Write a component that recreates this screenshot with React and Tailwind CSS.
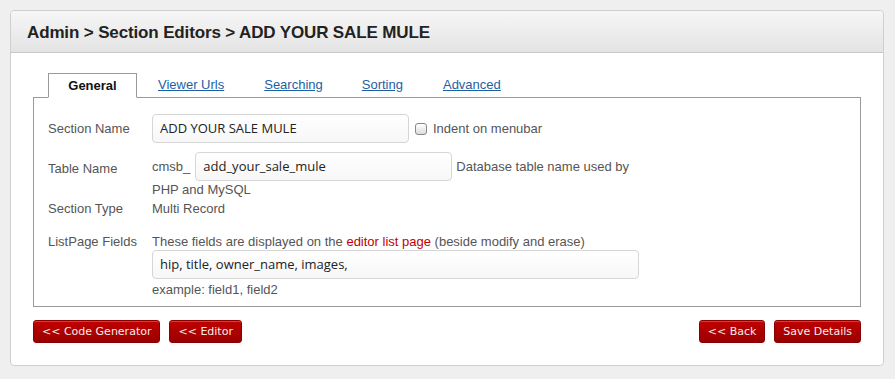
export default function App() {
  const btn =
    "h-[23px] px-[8px] rounded-[3px] border border-[#8a0000] bg-gradient-to-b from-[#c00000] to-[#9a0000] text-[#fbeaea] text-[11px] leading-none [font-family:'DejaVu_Sans',Verdana,sans-serif] flex items-center shadow-[inset_0_1px_0_rgba(255,255,255,0.25)]";
  const input =
    "h-[29px] rounded-[4px] border border-[#d6d6d6] bg-gradient-to-b from-white to-[#f7f7f7] px-[7px] flex items-center text-[13px] text-[#222] [font-family:'Open_Sans',sans-serif]";
  return (
    <div className="w-[895px] h-[379px] bg-[#efefef] pt-[10px] pl-[10px] [font-family:'Liberation_Sans',Arial,sans-serif]">
      <div className="w-[874px] h-[356px] bg-white border border-[#cfcfcf] rounded-[4px] flex flex-col">
        <div className="h-[42px] bg-gradient-to-b from-[#f6f6f6] to-[#e4e4e4] border-b border-[#c8c8c8] rounded-t-[4px] flex items-center pl-[16px] pt-[2px]">
          <h1 className="text-[17px] font-bold text-[#222] tracking-[-0.14px]">
            Admin &gt; Section Editors &gt; ADD YOUR SALE MULE
          </h1>
        </div>
        <div className="px-[22px] pt-[20px]">
          <div className="flex items-end pl-[15px] h-[24px] text-[13px]">
            <div className="w-[89px] h-[25px] -mb-px border border-[#999] border-b-white bg-white flex items-center justify-center font-bold text-[#111] relative z-10">
              General
            </div>
            <a className="ml-[21px] mb-[3px] text-[#1d5fa5] underline">Viewer Urls</a>
            <a className="ml-[40px] mb-[3px] text-[#1d5fa5] underline">Searching</a>
            <a className="ml-[39px] mb-[3px] text-[#1d5fa5] underline">Sorting</a>
            <a className="ml-[40px] mb-[3px] text-[#1d5fa5] underline">Advanced</a>
          </div>
          <div className="h-[210px] border border-[#999] pl-[14px] pt-[16px] text-[13px] text-[#555]">
            <div className="flex items-center">
              <div className="w-[104px]">Section Name</div>
              <div className={input + " w-[257px]"}>ADD YOUR SALE MULE</div>
              <div className="ml-[6px] w-[12px] h-[12px] rounded-[3px] border border-[#888] bg-gradient-to-b from-white to-[#ddd]" />
              <div className="ml-[6px]">Indent on menubar</div>
            </div>
            <div className="flex mt-[9px]">
              <div className="w-[104px] pt-[7px]">Table Name</div>
              <div className="w-[490px]">
                <div className="flex items-center">
                  <span className="mr-[5px]">cmsb_</span>
                  <div className={input + " w-[257px]"}>add_your_sale_mule</div>
                  <span className="ml-[4px]">Database table name used by</span>
                </div>
                <div className="leading-[15px] mt-[1px]">PHP and MySQL</div>
              </div>
            </div>
            <div className="flex mt-[4px] leading-[15px]">
              <div className="w-[104px]">Section Type</div>
              <div>Multi Record</div>
            </div>
            <div className="flex mt-[18px]">
              <div className="w-[104px] leading-[15px]">ListPage Fields</div>
              <div>
                <div className="leading-[15px]">
                  These fields are displayed on the <span className="text-[#c00000]">editor list page</span> (beside modify and erase)
                </div>
                <div className={input + " w-[487px] mt-[1px] h-[29px]"}>hip, title, owner_name, images,</div>
                <div className="leading-[15px] mt-[3px]">example: field1, field2</div>
              </div>
            </div>
          </div>
          <div className="flex items-center mt-[13px]">
            <button className={btn}>&lt;&lt; Code Generator</button>
            <button className={btn + " ml-[9px]"}>&lt;&lt; Editor</button>
            <div className="flex-1" />
            <button className={btn}>&lt;&lt; Back</button>
            <button className={btn + " ml-[9px]"}>Save Details</button>
          </div>
        </div>
      </div>
    </div>
  );
}
